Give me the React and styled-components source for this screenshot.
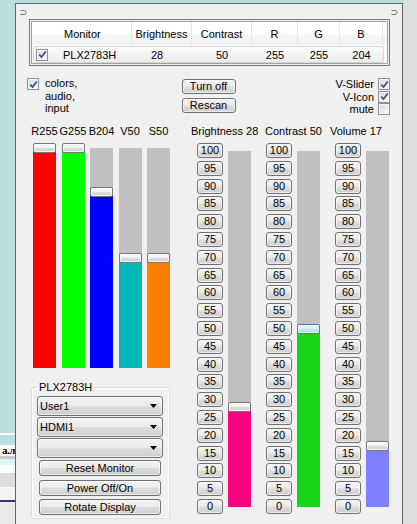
import React from 'react';
import styled, { createGlobalStyle } from 'styled-components';

const GlobalStyle = createGlobalStyle`
  html, body {
    margin: 0;
    padding: 0;
    background: #badfe0;
  }
  body {
    font-family: "Liberation Sans", Arial, sans-serif;
    font-size: 11px;
    color: #000;
  }
  * {
    box-sizing: border-box;
  }
`;

const Screen = styled.div`
  display: flex;
  width: 417px;
  height: 524px;
  overflow: hidden;
  background: #badfe0;
`;

const BackStrip = styled.div`
  width: 15px;
  flex: none;
  display: flex;
  flex-direction: column;
`;

const Stripe = styled.div`
  flex: none;
  height: ${p => p.$h}px;
  background: ${p => p.$bg};
`;

const CutText = styled.div`
  flex: none;
  height: 11px;
  background: #fff;
  display: flex;
  justify-content: flex-end;
  font-family: "Liberation Serif", serif;
  font-weight: bold;
  font-size: 11px;
  letter-spacing: -0.5px;
  line-height: 11px;
  white-space: nowrap;
`;

const Window = styled.div`
  width: 388px;
  flex: none;
  margin-top: 3px;
  border: 1px solid #646464;
  border-bottom: 0;
  background: #f0f0f0;
  display: flex;
  flex-direction: column;
`;

const SideStrip = styled.div`
  flex: 1;
  background: #dedede;
`;

const TopBar = styled.div`
  height: 15px;
  display: flex;
  justify-content: space-between;
  padding: 5px 4px 0 4px;
`;

const ListFrame = styled.div`
  margin: 0 12px 0 13px;
  height: 47px;
  border: 1px solid #7a7a7a;
  padding: 1px;
`;

const ListInner = styled.div`
  height: 100%;
  border: 1px solid #a0a0a0;
  background: #fff;
`;

const HeaderRow = styled.div`
  display: grid;
  grid-template-columns: 100px 60px 60px 46px 42px 43px 1fr;
  height: 23px;
  background: linear-gradient(#ffffff 0%, #ffffff 45%, #f6f7f8 55%, #f0f1f2 100%);
`;

const HeaderCell = styled.div`
  display: flex;
  align-items: center;
  justify-content: ${p => (p.$left ? 'flex-start' : 'center')};
  padding-left: ${p => (p.$left ? '32px' : '0')};
  border-right: 1px solid #e3e5e7;
  &:last-child {
    border-right: 0;
  }
`;

const DataRow = styled.div`
  display: grid;
  grid-template-columns: 98px 60px 60px 46px 42px 1fr;
  height: 17px;
  margin: 1px 3px 0 1px;
  border: 1px solid #d6d6d6;
  border-radius: 2px;
  background: linear-gradient(#fbfbfb, #ececec);
`;

const DataCell = styled.div`
  display: flex;
  align-items: center;
  justify-content: ${p => (p.$left ? 'flex-start' : 'center')};
  padding-left: ${p => (p.$left ? '2px' : '0')};
  padding-right: ${p => p.$shift || 0}px;
`;

const MonitorName = styled.span`
  margin-left: 15px;
`;

const Box = styled.span`
  flex: none;
  display: inline-flex;
  align-items: center;
  justify-content: center;
  width: 12px;
  height: 12px;
  border: 1px solid #8e8f8f;
  background: linear-gradient(135deg, #d6d8dc, #fdfdfd);
  box-shadow: inset 0 0 0 1px #f6f6f6;
`;

const OptionsRow = styled.div`
  display: grid;
  grid-template-columns: 1fr auto 1fr;
  height: 38px;
  margin-top: 12px;
  padding: 0 12px 0 11px;
`;

const OptionLeft = styled.div`
  display: flex;
  gap: 6px;
  align-items: flex-start;
`;

const OptionText = styled.div`
  line-height: 12.5px;
  margin-top: -1px;
`;

const CenterButtons = styled.div`
  display: flex;
  flex-direction: column;
  gap: 4px;
  margin-top: 1px;
`;

const WinButton = styled.button`
  display: block;
  width: ${p => p.$w}px;
  height: ${p => p.$h}px;
  margin: 0;
  padding: 0;
  border: 1px solid #707070;
  border-radius: 3px;
  background: linear-gradient(#f2f2f2 0%, #ebebeb 48%, #dddddd 52%, #cfcfcf 100%);
  box-shadow: inset 0 0 0 1px rgba(255, 255, 255, 0.6);
  font-family: "Liberation Sans", Arial, sans-serif;
  font-size: 11px;
  line-height: ${p => p.$h - 2}px;
  color: #000;
  text-align: center;
`;

const OptionRight = styled.div`
  display: flex;
  flex-direction: column;
  align-items: flex-end;
`;

const ToggleRow = styled.div`
  display: flex;
  align-items: center;
  gap: 4px;
  height: 12.6px;
`;

const Main = styled.div`
  display: flex;
  margin-top: 9px;
`;

const LeftPane = styled.div`
  width: 139px;
  margin-left: 15px;
  display: flex;
  flex-direction: column;
`;

const BarsRow = styled.div`
  display: flex;
  gap: 5.5px;
  padding-left: 2px;
`;

const SliderColumn = styled.div`
  width: 23px;
  display: flex;
  flex-direction: column;
  align-items: center;
`;

const SliderLabel = styled.div`
  height: 12px;
  line-height: 12px;
  white-space: nowrap;
`;

const Track = styled.div`
  position: relative;
  width: 23px;
  height: ${p => p.$h}px;
  margin-top: ${p => p.$mt}px;
  background: #c0c0c0;
  flex: none;
`;

const Fill = styled.div`
  position: absolute;
  left: 0;
  right: 0;
  bottom: 0;
  background: ${p => p.$color};
`;

const Thumb = styled.div`
  position: absolute;
  left: 0;
  width: 23px;
  height: 10px;
  border: 1px solid ${p => (p.$hot ? '#3c7fb1' : '#777')};
  border-radius: 2px;
  background: ${p =>
    p.$hot
      ? 'linear-gradient(#eaf6fd 0%, #d9f0fc 45%, #bee6fd 55%, #a7d9f5 100%)'
      : 'linear-gradient(#fdfdfd 0%, #f0f0f0 45%, #dcdcdc 55%, #d2d2d2 100%)'};
  box-shadow: inset 0 0 0 1px rgba(255, 255, 255, 0.7);
`;

const GroupBox = styled.fieldset`
  margin: 13px 0 0 0;
  padding: 0 6px 3px 5px;
  min-width: 0;
  border: 1px solid #d5dfe5;
  border-radius: 3px;
  box-shadow: inset 0 0 0 1px #fff;
`;

const Legend = styled.legend`
  padding: 0 2px;
  font-size: 11px;
  line-height: 12px;
`;

const ComboList = styled.div`
  display: flex;
  flex-direction: column;
  gap: 1px;
  margin-top: 3px;
`;

const Combo = styled.div`
  height: 20px;
  display: flex;
  align-items: center;
  justify-content: space-between;
  padding: 0 5px 0 2px;
  border: 1px solid #707070;
  border-radius: 3px;
  background: linear-gradient(#f2f2f2 0%, #ebebeb 48%, #dddddd 52%, #cfcfcf 100%);
  box-shadow: inset 0 0 0 1px rgba(255, 255, 255, 0.6);
`;

const ActionList = styled.div`
  display: flex;
  flex-direction: column;
  gap: 3.5px;
  margin: 2px 1px 0 2px;
`;

const RightPane = styled.div`
  margin-left: 21px;
  display: flex;
  flex-direction: column;
`;

const RightLabels = styled.div`
  display: flex;
  height: 12px;
  line-height: 12px;
  white-space: nowrap;
`;

const RightLabel = styled.div`
  width: ${p => (p.$w ? `${p.$w}px` : 'auto')};
`;

const Groups = styled.div`
  display: flex;
  gap: 15px;
  margin-top: 6px;
  padding-left: 6px;
`;

const Group = styled.div`
  display: flex;
  gap: 5px;
`;

const ButtonStack = styled.div`
  width: 26px;
  height: 371px;
  display: flex;
  flex-direction: column;
  justify-content: space-between;
`;

const Pin = () => (
  <svg width="7" height="7" viewBox="0 0 7 7">
    <path d="M0.5 1.5 H4 Q6 1.5 6 3.5 Q6 5.5 4 5.5 H0.5" fill="none" stroke="#7a7a7a" strokeWidth="1" />
  </svg>
);

const Check = ({ on }) => (
  <Box>
    {on && (
      <svg width="9" height="9" viewBox="0 0 9 9">
        <path d="M1.2 4.6 L3.5 7 L7.8 1.4" fill="none" stroke="#2a4a9e" strokeWidth="1.7" />
      </svg>
    )}
  </Box>
);

const Arrow = () => (
  <svg width="7" height="4" viewBox="0 0 7 4">
    <path d="M0 0 H7 L3.5 4 Z" fill="#000" />
  </svg>
);

const Slider = ({ value, max, color, height, mt, hot }) => {
  const pct = (value / max) * 100;
  return (
    <Track $h={height} $mt={mt}>
      <Fill $color={color} style={{ height: `${pct}%` }} />
      <Thumb $hot={hot} style={{ bottom: `calc(${pct}% - 5px)` }} />
    </Track>
  );
};

const bars = [
  { label: 'R255', value: 255, max: 255, color: '#ff0000' },
  { label: 'G255', value: 255, max: 255, color: '#00ff00' },
  { label: 'B204', value: 204, max: 255, color: '#0000ff' },
  { label: 'V50', value: 50, max: 100, color: '#00b8b8' },
  { label: 'S50', value: 50, max: 100, color: '#ff8000' },
];

const levels = [
  { label: 'Brightness 28', w: 74, value: 28, color: '#ff0080' },
  { label: 'Contrast 50', w: 65, value: 50, color: '#1ad41a', hot: true },
  { label: 'Volume 17', value: 17, color: '#8080ff' },
];

const steps = Array.from({ length: 21 }, (_, i) => 100 - i * 5);

export default function App() {
  return (
    <Screen>
      <GlobalStyle />
      <BackStrip>
        <Stripe $h={433} $bg="#badfe0" />
        <Stripe $h={2} $bg="#ffffff" />
        <Stripe $h={10} $bg="#badfe0" />
        <CutText>а.л</CutText>
        <Stripe $h={3} $bg="#c8c8c8" />
        <Stripe $h={6} $bg="#d9f7fb" />
        <Stripe $h={8} $bg="#ffffff" />
        <Stripe $h={14} $bg="#dcdcdc" />
        <Stripe $h={13} $bg="#f4f4f4" />
        <Stripe $h={2} $bg="#2b3d6b" />
        <Stripe $h={22} $bg="#e9e9e9" />
      </BackStrip>

      <Window>
        <TopBar>
          <Pin />
          <Pin />
        </TopBar>

        <ListFrame>
          <ListInner>
            <HeaderRow>
              <HeaderCell $left>Monitor</HeaderCell>
              <HeaderCell>Brightness</HeaderCell>
              <HeaderCell>Contrast</HeaderCell>
              <HeaderCell>R</HeaderCell>
              <HeaderCell>G</HeaderCell>
              <HeaderCell>B</HeaderCell>
              <HeaderCell />
            </HeaderRow>
            <DataRow>
              <DataCell $left>
                <Check on />
                <MonitorName>PLX2783H</MonitorName>
              </DataCell>
              <DataCell $shift={10}>28</DataCell>
              <DataCell>50</DataCell>
              <DataCell>255</DataCell>
              <DataCell>255</DataCell>
              <DataCell>204</DataCell>
            </DataRow>
          </ListInner>
        </ListFrame>

        <OptionsRow>
          <OptionLeft>
            <Check on />
            <OptionText>
              colors,
              <br />
              audio,
              <br />
              input
            </OptionText>
          </OptionLeft>
          <CenterButtons>
            <WinButton $w={54} $h={15}>Turn off</WinButton>
            <WinButton $w={54} $h={15}>Rescan</WinButton>
          </CenterButtons>
          <OptionRight>
            <ToggleRow>
              V-Slider <Check on />
            </ToggleRow>
            <ToggleRow>
              V-Icon <Check on />
            </ToggleRow>
            <ToggleRow>
              mute <Check />
            </ToggleRow>
          </OptionRight>
        </OptionsRow>

        <Main>
          <LeftPane>
            <BarsRow>
              {bars.map(b => (
                <SliderColumn key={b.label}>
                  <SliderLabel>{b.label}</SliderLabel>
                  <Slider value={b.value} max={b.max} color={b.color} height={220} mt={11} />
                </SliderColumn>
              ))}
            </BarsRow>
            <GroupBox>
              <Legend>PLX2783H</Legend>
              <ComboList>
                <Combo>
                  <span>User1</span>
                  <Arrow />
                </Combo>
                <Combo>
                  <span>HDMI1</span>
                  <Arrow />
                </Combo>
                <Combo>
                  <span />
                  <Arrow />
                </Combo>
              </ComboList>
              <ActionList>
                <WinButton $w={122} $h={16}>Reset Monitor</WinButton>
                <WinButton $w={122} $h={16}>Power Off/On</WinButton>
                <WinButton $w={122} $h={16}>Rotate Display</WinButton>
              </ActionList>
            </GroupBox>
          </LeftPane>

          <RightPane>
            <RightLabels>
              {levels.map(l => (
                <RightLabel key={l.label} $w={l.w}>
                  {l.label}
                </RightLabel>
              ))}
            </RightLabels>
            <Groups>
              {levels.map(l => (
                <Group key={l.label}>
                  <ButtonStack>
                    {steps.map(s => (
                      <WinButton key={s} $w={26} $h={15}>
                        {s}
                      </WinButton>
                    ))}
                  </ButtonStack>
                  <Slider value={l.value} max={100} color={l.color} height={356} mt={8} hot={l.hot} />
                </Group>
              ))}
            </Groups>
          </RightPane>
        </Main>
      </Window>

      <SideStrip />
    </Screen>
  );
}
